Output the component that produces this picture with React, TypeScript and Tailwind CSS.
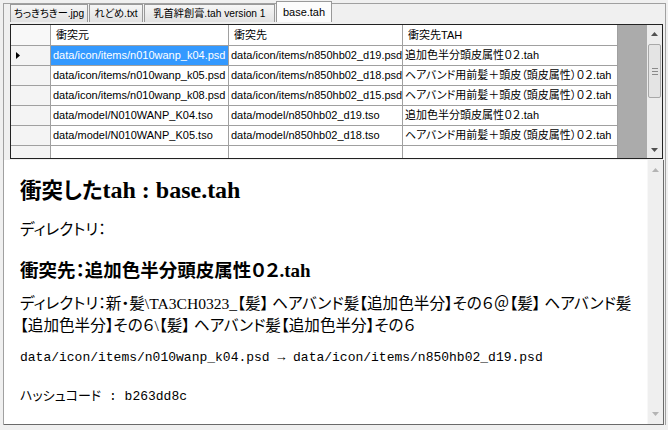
import React from 'react';

const ui = "font-['Liberation_Sans','Noto_Sans_CJK_JP',sans-serif] [font-feature-settings:'palt']";
const body = "font-['Liberation_Serif','Noto_Sans_CJK_JP',serif] [font-feature-settings:'palt']";
const mono = "font-['Liberation_Mono','Noto_Sans_CJK_JP',monospace]";

const rows = [
  ['data/icon/items/n010wanp_k04.psd', 'data/icon/items/n850hb02_d19.psd', '追加色半分頭皮属性０２.tah'],
  ['data/icon/items/n010wanp_k05.psd', 'data/icon/items/n850hb02_d18.psd', 'ヘアバンド用前髪＋頭皮（頭皮属性）０２.tah'],
  ['data/icon/items/n010wanp_k08.psd', 'data/icon/items/n850hb02_d15.psd', 'ヘアバンド用前髪＋頭皮（頭皮属性）０２.tah'],
  ['data/model/N010WANP_K04.tso', 'data/model/n850hb02_d19.tso', '追加色半分頭皮属性０２.tah'],
  ['data/model/N010WANP_K05.tso', 'data/model/n850hb02_d18.tso', 'ヘアバンド用前髪＋頭皮（頭皮属性）０２.tah'],
];

const cols = [
  { title: '衝突元', w: 'w-[178px]' },
  { title: '衝突先', w: 'w-[174px]' },
  { title: '衝突先TAH', w: 'w-[215px]' },
];

const tabs = [
  { label: 'ちっきちきー.jpg', w: 'w-[78px]' },
  { label: 'れどめ.txt', w: 'w-[54px]' },
  { label: '乳首絆創膏.tah version 1', w: 'w-[131px]' },
];

function Arrow({ up, color }: { up?: boolean; color: string }) {
  return (
    <svg width="7" height="4" viewBox="0 0 7 4">
      <polygon points={up ? '3.5,0 7,4 0,4' : '0,0 7,0 3.5,4'} fill={color} />
    </svg>
  );
}

function GridScrollbar() {
  return (
    <div className="w-[15px] bg-[#ececec] flex flex-col items-center">
      <div className="h-[17px] w-full flex items-center justify-center">
        <Arrow up color="#505050" />
      </div>
      <div className="mt-[2px] h-[54px] w-[13px] rounded-[2px] border border-[#a8a8a8] bg-[#e4e4e4] flex flex-col items-center justify-center gap-[2px]">
        <div className="w-[6px] h-px bg-[#8a8a8a]" />
        <div className="w-[6px] h-px bg-[#8a8a8a]" />
        <div className="w-[6px] h-px bg-[#8a8a8a]" />
      </div>
      <div className="flex-1" />
      <div className="h-[17px] w-full flex items-center justify-center">
        <Arrow color="#505050" />
      </div>
    </div>
  );
}

function Grid() {
  return (
    <div className={`mt-[2px] w-[653px] h-[135px] border border-[#222] bg-white flex text-[11px] text-black ${ui}`}>
      <div className="flex-1 flex flex-col overflow-hidden">
        <div className="flex h-[21px] shrink-0">
          <div className="w-[40px] border-r border-b border-[#a0a0a0] bg-[#f8f8f8]" />
          {cols.map((c) => (
            <div key={c.title} className={`${c.w} border-r border-b border-[#a0a0a0] bg-white pl-[5px] flex items-center whitespace-nowrap`}>
              {c.title}
            </div>
          ))}
          <div className="flex-1 bg-[#ababab]" />
        </div>
        {rows.map((r, i) => (
          <div key={i} className="flex h-[20px] shrink-0">
            <div className="w-[40px] border-r border-b border-[#a0a0a0] bg-[#f4f4f4] flex items-center pl-[5px]">
              {i === 0 && (
                <svg width="4" height="7" viewBox="0 0 4 7">
                  <polygon points="0,0 4,3.5 0,7" fill="#000" />
                </svg>
              )}
            </div>
            {r.map((v, j) => (
              <div
                key={j}
                className={`${cols[j].w} border-r border-b border-[#a0a0a0] pl-[2px] flex items-center whitespace-nowrap overflow-hidden ${
                  i === 0 && j === 0 ? 'bg-[#3399ff] text-white' : 'bg-white'
                }`}
              >
                {v}
              </div>
            ))}
            <div className="flex-1 bg-[#ababab]" />
          </div>
        ))}
        <div className="flex flex-1">
          <div className="w-[40px] border-r border-[#a0a0a0] bg-[#f4f4f4]" />
          {cols.map((c) => (
            <div key={c.title} className={`${c.w} border-r border-[#a0a0a0] bg-white`} />
          ))}
          <div className="flex-1 bg-[#ababab]" />
        </div>
      </div>
      <GridScrollbar />
    </div>
  );
}

export default function App() {
  return (
    <div className="w-[668px] h-[430px] bg-[#f0f0f0] pt-[3px] pl-[3px] overflow-hidden">
      <div className="w-[663px] h-[422px] border-l border-t border-r border-[#a0a0a0] flex flex-col">
        {/* tab control */}
        <div className="h-[156px] pl-[6px] flex flex-col shrink-0">
          <div className={`flex h-[18px] text-[10.2px] text-black ${ui}`}>
            {tabs.map((t) => (
              <div
                key={t.label}
                className={`${t.w} mr-px h-[18px] border border-b-0 border-[#999] bg-gradient-to-b from-[#f6f6f6] to-[#e2e2e2] flex items-center justify-center whitespace-nowrap`}
              >
                {t.label}
              </div>
            ))}
            <div className="w-[56px] h-[21px] -mt-[3px] border border-b-0 border-[#999] bg-[#fcfcfc] flex items-center justify-center whitespace-nowrap text-[11px]">
              base.tah
            </div>
          </div>
          <Grid />
        </div>

        {/* html view */}
        <div className="flex-1 mr-px bg-white border-r border-b border-[#6a6a6a] flex">
          <div className={`flex-1 pl-[16px] pt-[16px] text-black ${body}`}>
            <div className="h-[28px] leading-[28px] font-bold whitespace-nowrap">
              <span className="text-[21.5px]">衝突した</span>
              <span className="text-[24px]">tah : base.tah</span>
            </div>
            <div className="mt-[16px] h-[20px] leading-[20px] text-[15.6px]">ディレクトリ：</div>
            <div className="mt-[19px] h-[24px] leading-[24px] font-bold text-[18.5px] whitespace-nowrap">
              衝突先：追加色半分頭皮属性０２<span className="text-[19px]">.tah</span>
            </div>
            <div className="mt-[10px] leading-[22px] text-[15.6px] whitespace-nowrap">
              ディレクトリ：新・髪\TA3CH0323_【髪】 ヘアバンド髪【追加色半分】その６＠【髪】 ヘアバンド髪
              <br />
              【追加色半分】その６\【髪】 ヘアバンド髪【追加色半分】その６
            </div>
            <div className={`mt-[13px] h-[16px] leading-[16px] text-[13px] whitespace-nowrap ${mono}`}>
              data/icon/items/n010wanp_k04.psd → data/icon/items/n850hb02_d19.psd
            </div>
            <div className={`mt-[23px] h-[16px] leading-[16px] text-[13px] whitespace-nowrap ${mono}`}>
              ハッシュコード : b263dd8c
            </div>
          </div>
          <div className="w-[16px] bg-[#efefef] border-l border-[#f8f8f8] flex flex-col items-center">
            <div className="h-[20px] flex items-center justify-center">
              <Arrow up color="#b4b4b4" />
            </div>
            <div className="flex-1" />
            <div className="h-[20px] flex items-center justify-center">
              <Arrow color="#b4b4b4" />
            </div>
          </div>
        </div>
      </div>
    </div>
  );
}
